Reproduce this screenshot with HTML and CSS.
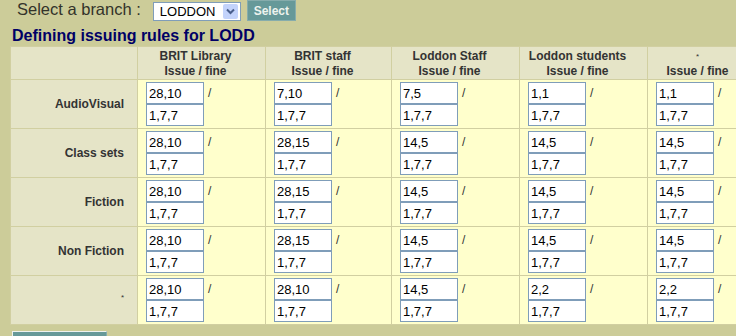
FILE: index.html
```html
<!DOCTYPE html>
<html lang="en">
<head>
    <meta charset="UTF-8">
    <title>Issuing rules</title>
    <link rel="stylesheet" href="styles.css">
</head>
<body>
    <form class="branch-bar">
        <label class="branch-label">Select a branch :</label>
        <span class="branch-select">
            <span class="branch-value">LODDON</span>
            <span class="branch-arrow">
                <svg width="15" height="15" viewBox="0 0 15 15">
                    <path d="M4 5.5 L7.5 9 L11 5.5" fill="none" stroke="#4a5f8c" stroke-width="2"/>
                </svg>
            </span>
        </span>
        <button type="button" class="teal-button">Select</button>
    </form>

    <h1 class="rules-title">Defining issuing rules for LODD</h1>

    <table class="rules-table" id="rulesTable">
        <colgroup>
            <col class="col-label">
            <col class="col-wide">
            <col class="col-narrow">
            <col class="col-wide">
            <col class="col-wide">
            <col class="col-last">
        </colgroup>
        <thead>
            <tr>
                <th></th>
                <th>BRIT Library<br>Issue / fine</th>
                <th>BRIT staff<br>Issue / fine</th>
                <th>Loddon Staff<br>Issue / fine</th>
                <th>Loddon students<br>Issue / fine</th>
                <th><span class="star">*</span><br>Issue / fine</th>
            </tr>
        </thead>
        <tbody>
            <!-- filled in below -->
        </tbody>
    </table>

    <button type="button" class="teal-button save-button" aria-label="Save"></button>

    <script>
        const rules = [
            { name: 'AudioVisual', issue: ['28,10', '7,10', '7,5', '1,1', '1,1'] },
            { name: 'Class sets', issue: ['28,10', '28,15', '14,5', '14,5', '14,5'] },
            { name: 'Fiction', issue: ['28,10', '28,15', '14,5', '14,5', '14,5'] },
            { name: 'Non Fiction', issue: ['28,10', '28,15', '14,5', '14,5', '14,5'] },
            { name: '*', issue: ['28,10', '28,10', '14,5', '2,2', '2,2'] }
        ];

        const tbody = document.querySelector('#rulesTable tbody');
        rules.forEach(rule => {
            const row = document.createElement('tr');
            const label = rule.name === '*' ? '<span class="star">*</span>' : rule.name;
            row.innerHTML = `<th class="row-label">${label}</th>` + rule.issue.map(issue => `
                <td>
                    <div class="rule-cell">
                        <div class="rule-inputs">
                            <input type="text" class="rule-input" value="${issue}">
                            <input type="text" class="rule-input" value="1,7,7">
                        </div>
                        <span class="slash">/</span>
                    </div>
                </td>`).join('');
            tbody.appendChild(row);
        });
    </script>
</body>
</html>
```

FILE: styles.css
```css
html {
    overflow: hidden;
}

body {
    font-family: "Liberation Sans", Arial, sans-serif;
    margin: 0;
    padding: 0 0 0 10px;
    background-color: #cccc99;
    color: #333;
    width: 760px;
}

.branch-bar {
    display: flex;
    align-items: flex-start;
    height: 22px;
    margin: 0;
    padding-left: 7px;
}
.branch-label {
    font-size: 16.5px;
    line-height: 18px;
    color: #33332a;
}
.branch-select {
    display: flex;
    align-items: center;
    justify-content: space-between;
    box-sizing: border-box;
    width: 88px;
    height: 19px;
    margin: 2px 0 0 12px;
    padding: 0 2px 0 6px;
    background: #fff;
    border: 1px solid #7f9db9;
}
.branch-value {
    font-size: 13px;
    color: #000;
}
.branch-arrow {
    display: flex;
    width: 15px;
    height: 15px;
    background: #c3d3fb;
    border-radius: 2px;
}
.teal-button {
    font-family: "Liberation Sans", Arial, sans-serif;
    font-size: 12px;
    font-weight: bold;
    color: #eef3ee;
    background-color: #669999;
    border: 1px solid #86acac;
    padding: 0;
    width: 49px;
    height: 21px;
    margin-left: 6px;
}

.rules-title {
    margin: 4px 0 0 2px;
    font-size: 16px;
    line-height: 20px;
    font-weight: bold;
    color: #000066;
}

.rules-table {
    table-layout: fixed;
    border-collapse: collapse;
    width: 749px;
    border: 1px solid #bdbb8d;
}
.col-label { width: 127px; }
.col-wide { width: 128px; }
.col-narrow { width: 126px; }
.col-last { width: 112px; }

.rules-table th,
.rules-table td {
    border: 1px solid #d1cfa1;
}
.rules-table thead th {
    background-color: #e5e4c7;
    font-size: 12px;
    line-height: 15px;
    padding: 2px 12px 0 0;
    text-align: center;
    color: #333;
}
.rules-table .row-label {
    background-color: #e5e4c7;
    font-size: 12px;
    text-align: right;
    padding: 0 13px 0 0;
    color: #333;
}
.rules-table td {
    background-color: #ffffcc;
    padding: 2px 0 2px 8px;
    vertical-align: top;
}
.star {
    font-size: 8px;
    font-weight: normal;
    vertical-align: top;
}

.rule-cell {
    display: flex;
    align-items: flex-start;
}
.rule-inputs {
    display: flex;
    flex-direction: column;
}
.rule-input {
    box-sizing: border-box;
    width: 58px;
    height: 22px;
    margin: 0;
    padding: 0 2px;
    font-family: "Liberation Sans", Arial, sans-serif;
    font-size: 13px;
    color: #000;
    background: #fff;
    border: 1px solid #7f9db9;
}
.slash {
    margin-left: 4px;
    font-size: 12px;
    line-height: 22px;
    color: #333;
}

.save-button {
    display: block;
    width: 95px;
    height: 22px;
    margin: 6px 0 0 2px;
    border-top-color: #eef2ee;
    border-left-color: #eef2ee;
}
```
